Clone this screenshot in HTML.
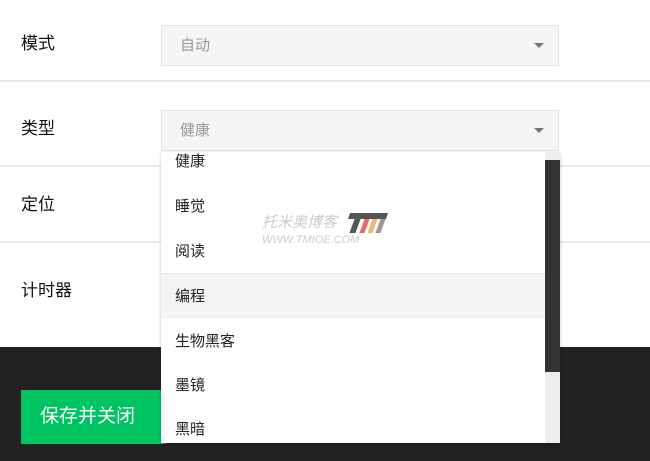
<!DOCTYPE html>
<html><head><meta charset="utf-8"><style>
*{margin:0;padding:0;box-sizing:border-box}
body{width:650px;height:461px;overflow:hidden;background:#fff;position:relative;font-family:"Liberation Sans","Noto Sans CJK SC",sans-serif;color:#111}
.a{position:absolute}
.lbl{left:21px;font-size:17px;line-height:20px}
.line{left:0;width:650px;height:2px;background:#e8e8e8}
.sel{left:161px;width:398px;height:41px;background:#f5f5f5;border:1px solid #e3e3e3;font-size:15px;color:#999;padding-left:18px;line-height:39px}
.tri{position:absolute;right:14px;top:17px;width:0;height:0;border-left:5px solid transparent;border-right:5px solid transparent;border-top:5px solid #777}
.it{position:absolute;left:14px;font-size:15px;line-height:20px;color:#222}
</style></head><body>
<div class="a lbl" style="top:34px">模式</div>
<div class="a sel" style="top:25px">自动<div class="tri"></div></div>
<div class="a line" style="top:80px"></div>
<div class="a lbl" style="top:119px">类型</div>
<div class="a sel" style="top:110px">健康<div class="tri"></div></div>
<div class="a line" style="top:165px"></div>
<div class="a lbl" style="top:195px">定位</div>
<div class="a line" style="top:241px"></div>
<div class="a lbl" style="top:281px">计时器</div>
<div class="a" style="left:0;top:347px;width:650px;height:114px;background:#222"></div>
<div class="a" style="left:21px;top:390px;width:145px;height:54px;background:#00c462;color:#fff;font-size:19px;line-height:54px;padding-left:19px">保存并关闭</div>
<div class="a" style="left:161px;top:152px;width:399px;height:291px;background:#fff;box-shadow:0 1px 3px rgba(0,0,0,.25);overflow:hidden">
 <div class="a" style="left:0;top:121px;width:384px;height:45px;background:#f4f4f4;border-top:1px solid #eaeaea;border-bottom:1px solid #eaeaea"></div>
 <div class="it" style="top:0px">健康</div>
 <div class="it" style="top:45px">睡觉</div>
 <div class="it" style="top:90px">阅读</div>
 <div class="it" style="top:135px">编程</div>
 <div class="it" style="top:180px">生物黑客</div>
 <div class="it" style="top:224px">墨镜</div>
 <div class="it" style="top:268px">黑暗</div>
 <div class="a" style="left:384px;top:0;width:15px;height:291px;background:#eee"></div>
 <div class="a" style="left:384px;top:8px;width:15px;height:212px;background:#333"></div>
</div>
<div class="a" style="left:262px;top:214px;font-size:15px;font-style:italic;color:#ccc;line-height:18px">托米奥博客</div>
<div class="a" style="left:262px;top:234px;font-size:11px;font-style:italic;color:#ccc">WWW.TMIOE.COM</div>
<div class="a" style="left:349px;top:213px;width:38px;height:6px;background:#555;transform:skewX(-20deg)"></div>
<div class="a" style="left:352px;top:219px;width:6px;height:14px;background:#555;transform:skewX(-20deg)"></div>
<div class="a" style="left:362px;top:219px;width:5px;height:14px;background:#e96a6a;transform:skewX(-20deg)"></div>
<div class="a" style="left:370px;top:219px;width:5px;height:14px;background:#efb870;transform:skewX(-20deg)"></div>
<div class="a" style="left:378px;top:219px;width:5px;height:14px;background:#999;transform:skewX(-20deg)"></div>
</body></html>
